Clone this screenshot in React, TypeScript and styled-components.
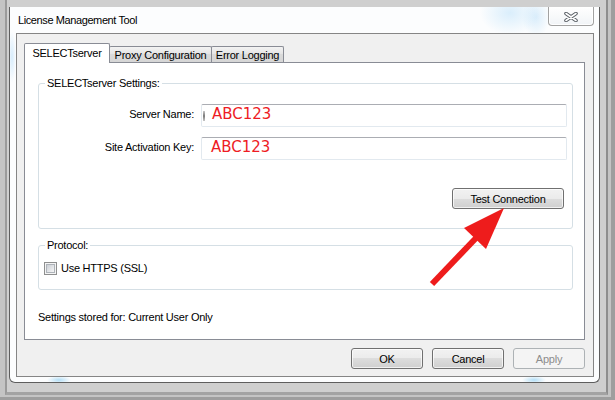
import React from "react";
import styled, { createGlobalStyle } from "styled-components";

const Global = createGlobalStyle`
  *, *::before, *::after { box-sizing: border-box; }
  html, body { margin: 0; padding: 0; }
  body {
    width: 615px;
    height: 400px;
    overflow: hidden;
    font-family: "Liberation Sans", Arial, sans-serif;
    font-size: 11px;
    letter-spacing: -0.25px;
    color: #000;
  }
`;

const Screen = styled.div`
  position: relative;
  width: 615px;
  height: 400px;
  display: flex;
  background: #9e9e9e;
  padding: 0 4px 3px 0;
`;

const OuterBand = styled.div`
  flex: 1;
  display: flex;
  background: #c4c4c4;
  padding: 0 3px 2px 5px;
`;

const Bevel = styled.div`
  flex: 1;
  display: flex;
  background: #cfcfcf;
  border-left: 2px solid #9a9a9a;
  border-right: 2px solid #8e8e8e;
  border-bottom: 3px solid #a3a3a3;
  padding: 7px 6px 9px 2px;
`;

const Window = styled.div`
  flex: 1;
  display: flex;
  flex-direction: column;
  border: 1px solid #5e5e5e;
  border-top: none;
  border-radius: 0 0 6px 6px;
  padding: 0 5px 5px 6px;
  background:
    radial-gradient(ellipse 12px 4px at 49px 373px, rgba(160, 215, 245, 0.8), transparent),
    radial-gradient(ellipse 12px 4px at 524px 373px, rgba(160, 215, 245, 0.8), transparent),
    radial-gradient(ellipse 4px 26px at 2px 50px, rgba(190, 225, 250, 0.6), transparent),
    radial-gradient(ellipse 30px 22px at 500px 6px, rgba(195, 228, 250, 0.6), transparent),
    radial-gradient(ellipse 14px 20px at 526px 10px, rgba(185, 222, 248, 0.5), transparent),
    #fcfdfe;
`;

const TitleBar = styled.div`
  height: 26px;
  display: flex;
  align-items: flex-start;
  justify-content: space-between;
`;

const Title = styled.div`
  line-height: 26px;
  padding-left: 2px;
  letter-spacing: -0.4px;
`;

const CloseButton = styled.div`
  width: 46px;
  height: 19px;
  display: flex;
  align-items: center;
  justify-content: center;
  border: 1px solid #a2a2a2;
  border-top: none;
  border-radius: 0 0 4px 4px;
  background: linear-gradient(#ffffff, #f1f4f7);
  box-shadow: inset 0 0 0 1px rgba(255, 255, 255, 0.9);
  padding-top: 1px;
`;

const Client = styled.div`
  flex: 1;
  display: flex;
  flex-direction: column;
  border: 1px solid #858585;
  background: #f0f0f0;
  padding: 9px 8px 7px 7px;
`;

const TabStrip = styled.div`
  height: 19px;
  display: flex;
  align-items: flex-end;
  position: relative;
  z-index: 1;
`;

const Tab = styled.div<{ $active?: boolean; $w: number }>`
  width: ${(p) => p.$w}px;
  height: ${(p) => (p.$active ? 20 : 16)}px;
  margin-bottom: ${(p) => (p.$active ? -1 : 0)}px;
  margin-left: ${(p) => (p.$active ? 0 : -1)}px;
  position: relative;
  z-index: ${(p) => (p.$active ? 2 : 1)};
  display: flex;
  align-items: center;
  justify-content: center;
  border: 1px solid #898c95;
  border-bottom: none;
  border-radius: 2px 2px 0 0;
  background: ${(p) => (p.$active ? "#ffffff" : "linear-gradient(#f3f3f3, #e3e3e3 50%, #dadada 50%, #d6d6d6)")};
  padding-bottom: ${(p) => (p.$active ? 1 : 0)}px;
`;

const Panel = styled.div`
  flex: 1;
  display: flex;
  flex-direction: column;
  border: 1px solid #898c95;
  background: #fff;
  padding: 13px 11px 0 13px;
`;

const GroupBox = styled.fieldset<{ $top?: number }>`
  margin: ${(p) => p.$top ?? 0}px 0 0 0;
  border: 1px solid #d5dfe5;
  border-radius: 3px;
  padding: 0;
  min-width: 0;
`;

const Legend = styled.legend`
  margin-left: 6px;
  padding: 0 2px;
  line-height: 14px;
`;

const SettingsBody = styled.div`
  display: grid;
  grid-template-columns: 155px 1fr;
  column-gap: 7px;
  row-gap: 10px;
  align-items: center;
  padding: 14px 5px 19px 0;
`;

const Label = styled.div`
  text-align: right;
  padding-bottom: 3px;
`;

const Field = styled.div<{ $pad: number }>`
  height: 23px;
  display: flex;
  align-items: center;
  padding-left: ${(p) => p.$pad}px;
  border: 1px solid #e2e9ef;
  border-top-color: #abadb3;
  border-radius: 2px;
  background: #fff;
  font-family: "DejaVu Sans", Verdana, sans-serif;
  font-size: 15px;
  letter-spacing: 0;
  color: #ee1c24;
  padding-bottom: 3px;
`;

const Caret = styled.span`
  width: 2px;
  height: 10px;
  margin-right: 7px;
  margin-top: 3px;
  background: linear-gradient(#c8c8c8, #7a7a7a 50%, #c8c8c8);
`;

const ActionRow = styled.div`
  grid-column: 1 / span 2;
  display: flex;
  justify-content: flex-end;
  padding-right: 3px;
  margin-top: 18px;
`;

const Button = styled.div<{ $w: number; $disabled?: boolean }>`
  width: ${(p) => p.$w}px;
  height: 21px;
  display: flex;
  align-items: center;
  justify-content: center;
  border: 1px solid ${(p) => (p.$disabled ? "#adb2b5" : "#707070")};
  border-radius: 3px;
  color: ${(p) => (p.$disabled ? "#8d8d8d" : "#000")};
  background: ${(p) =>
    p.$disabled ? "#f4f4f4" : "linear-gradient(#f2f2f2 0%, #ebebeb 50%, #dddddd 50%, #cfcfcf 100%)"};
  box-shadow: inset 0 0 0 1px ${(p) => (p.$disabled ? "#f4f4f4" : "rgba(255,255,255,0.7)")};
`;

const ProtocolBody = styled.div`
  display: flex;
  align-items: center;
  gap: 4px;
  padding: 9px 0 14px 5px;
  line-height: 14px;
`;

const CheckBox = styled.span`
  width: 13px;
  height: 13px;
  border: 1px solid #8e8f8f;
  background: #f4f4f4;
  padding: 1px;
  display: flex;
  &::after {
    content: "";
    flex: 1;
    border: 1px solid #aeb3b9;
    background: linear-gradient(135deg, #cbcfd5, #f6f6f6);
  }
`;

const Note = styled.div`
  margin-top: 20px;
  line-height: 14px;
`;

const ButtonRow = styled.div`
  display: flex;
  justify-content: flex-end;
  gap: 9px;
  margin-top: 8px;
`;

const ArrowLayer = styled.svg`
  position: absolute;
  left: 425px;
  top: 200px;
  pointer-events: none;
`;

export default function App() {
  return (
    <>
      <Global />
      <Screen>
        <OuterBand>
          <Bevel>
            <Window>
              <TitleBar>
                <Title>License Management Tool</Title>
                <CloseButton>
                  <svg width="14" height="10" viewBox="0 0 14 10">
                    <path d="M2 1.5 L12 8.5 M12 1.5 L2 8.5" stroke="#5a5f66" strokeWidth="3.6" strokeLinecap="round" />
                    <path d="M2 1.5 L12 8.5 M12 1.5 L2 8.5" stroke="#ffffff" strokeWidth="1.6" strokeLinecap="round" />
                  </svg>
                </CloseButton>
              </TitleBar>
              <Client>
                <TabStrip>
                  <Tab $active $w={86}>SELECTserver</Tab>
                  <Tab $w={103}>Proxy Configuration</Tab>
                  <Tab $w={73}>Error Logging</Tab>
                </TabStrip>
                <Panel>
                  <GroupBox>
                    <Legend>SELECTserver Settings:</Legend>
                    <SettingsBody>
                      <Label>Server Name:</Label>
                      <Field $pad={1}>
                        <Caret />
                        ABC123
                      </Field>
                      <Label>Site Activation Key:</Label>
                      <Field $pad={9}>ABC123</Field>
                      <ActionRow>
                        <Button $w={112}>Test Connection</Button>
                      </ActionRow>
                    </SettingsBody>
                  </GroupBox>
                  <GroupBox $top={9}>
                    <Legend>Protocol:</Legend>
                    <ProtocolBody>
                      <CheckBox />
                      <span>Use HTTPS (SSL)</span>
                    </ProtocolBody>
                  </GroupBox>
                  <Note>Settings stored for: Current User Only</Note>
                </Panel>
                <ButtonRow>
                  <Button $w={72}>OK</Button>
                  <Button $w={72}>Cancel</Button>
                  <Button $w={72} $disabled>
                    Apply
                  </Button>
                </ButtonRow>
              </Client>
            </Window>
          </Bevel>
        </OuterBand>
        <ArrowLayer width="90" height="90" viewBox="425 200 90 90">
          <line x1="432" y1="284" x2="477" y2="237" stroke="#ee1c1c" strokeWidth="6" />
          <polygon points="504,208 486,249 464,228" fill="#ee1c1c" />
        </ArrowLayer>
      </Screen>
    </>
  );
}
